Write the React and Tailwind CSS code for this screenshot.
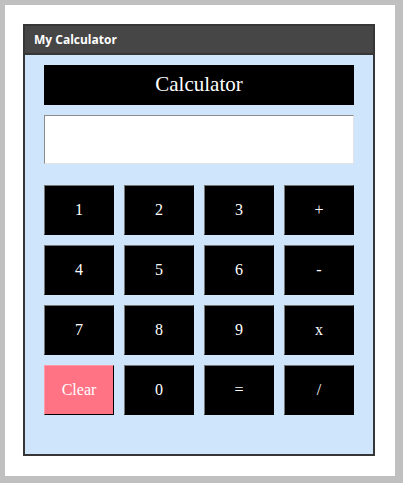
export default function App() {
  const keys = ["1", "2", "3", "+", "4", "5", "6", "-", "7", "8", "9", "x", "Clear", "0", "=", "/"];

  return (
    <div className="w-[403px] h-[483px] bg-[#c0c0c0] pt-[5px] pl-[5px]">
      <div className="w-[390px] h-[471px] bg-white pt-[19px] pl-[18px]">
        {/* fenêtre */}
        <div className="w-[352px] h-[432px] border-2 border-[#363636] bg-[#cfe5fb] flex flex-col">
          <div className="h-[29px] bg-[#464646] border-b-2 border-[#363636] flex items-center pl-[9px]">
            <span className="text-white text-[12px] font-bold font-['Open_Sans',sans-serif]">My Calculator</span>
          </div>
          <div className="pl-[19px] pt-[10px] font-['Liberation_Serif',serif]">
            <div className="w-[310px] h-[40px] bg-black text-white text-[21px] flex items-center justify-center">
              Calculator
            </div>
            <input
              className="mt-[10px] w-[310px] h-[49px] bg-white border border-t-[#8c8c8c] border-l-[#8c8c8c] border-b-[#e3e3e3] border-r-[#e3e3e3] outline-none"
              readOnly
            />
            <div className="mt-[21px] grid grid-cols-[repeat(4,70px)] gap-[10px]">
              {keys.map((k) => (
                <button
                  key={k}
                  className={`h-[50px] text-[16px] text-white border border-t-[#767676] border-l-[#767676] border-b-black border-r-black ${
                    k === "Clear" ? "bg-[#ff7385] border-t-[#ff9aa6] border-l-[#ff9aa6]" : "bg-black"
                  }`}
                >
                  {k}
                </button>
              ))}
            </div>
          </div>
        </div>
      </div>
    </div>
  );
}
